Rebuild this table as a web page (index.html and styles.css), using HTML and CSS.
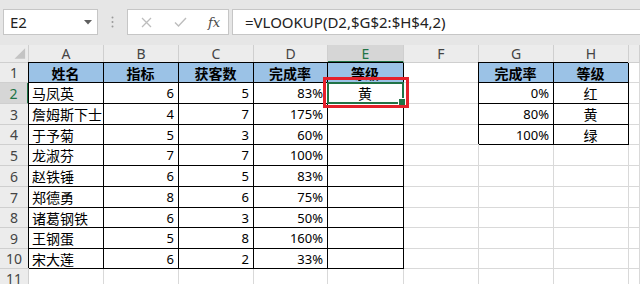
FILE: index.html
```html
<!DOCTYPE html>
<html lang="zh">
<head>
    <meta charset="UTF-8">
    <title>等级查询</title>
    <link rel="stylesheet" href="styles.css">
</head>
<body>
    <!-- Name box + formula bar -->
    <div class="toolbar">
        <div class="namebox">
            <span>E2</span>
            <svg class="caret" width="8" height="5" viewBox="0 0 8 5"><path d="M0 0h8L4 4.5z" fill="#5f5f5f"/></svg>
        </div>
        <div class="grip">
            <svg width="3" height="12" viewBox="0 0 3 12"><circle cx="1.5" cy="1.5" r="1" fill="#9a9a9a"/><circle cx="1.5" cy="6" r="1" fill="#9a9a9a"/><circle cx="1.5" cy="10.5" r="1" fill="#9a9a9a"/></svg>
        </div>
        <div class="fxbox">
            <svg class="btn" width="11" height="11" viewBox="0 0 11 11"><path d="M1 1l9 9M10 1l-9 9" stroke="#bdbdbd" stroke-width="1.3"/></svg>
            <svg class="btn" width="13" height="10" viewBox="0 0 13 10"><path d="M1 5.5l3.5 3.5L12 1" stroke="#bdbdbd" stroke-width="1.4" fill="none"/></svg>
            <span class="fx">fx</span>
        </div>
        <div class="formula">=VLOOKUP(D2,$G$2:$H$4,2)</div>
    </div>

    <!-- Worksheet -->
    <div class="sheet">
        <div class="corner"><svg width="29" height="18" viewBox="0 0 29 18"><path d="M26 3v11H15z" fill="#c4c4c4"/></svg></div>
        <div class="ch">A</div><div class="ch">B</div><div class="ch">C</div><div class="ch">D</div>
        <div class="ch on">E</div><div class="ch">F</div><div class="ch">G</div><div class="ch">H</div><div class="ch"></div>

        <div class="rh">1</div>
        <div class="c t hd">姓名</div><div class="c t hd">指标</div><div class="c t hd">获客数</div><div class="c t hd">完成率</div><div class="c t hd">等级</div>
        <div class="c"></div><div class="c t hd">完成率</div><div class="c t hd">等级</div><div class="c"></div>

        <div class="rh on">2</div>
        <div class="c t">马凤英</div><div class="c t n">6</div><div class="c t n">5</div><div class="c t n">83%</div>
        <div class="c t m sel">黄<span class="pick"></span><span class="mark"></span></div>
        <div class="c"></div><div class="c t n">0%</div><div class="c t m">红</div><div class="c"></div>

        <div class="rh">3</div>
        <div class="c t">詹姆斯下士</div><div class="c t n">4</div><div class="c t n">7</div><div class="c t n">175%</div><div class="c t"></div>
        <div class="c"></div><div class="c t n">80%</div><div class="c t m">黄</div><div class="c"></div>

        <div class="rh">4</div>
        <div class="c t">于予菊</div><div class="c t n">5</div><div class="c t n">3</div><div class="c t n">60%</div><div class="c t"></div>
        <div class="c"></div><div class="c t n">100%</div><div class="c t m">绿</div><div class="c"></div>

        <div class="rh">5</div>
        <div class="c t">龙淑芬</div><div class="c t n">7</div><div class="c t n">7</div><div class="c t n">100%</div><div class="c t"></div>
        <div class="c"></div><div class="c"></div><div class="c"></div><div class="c"></div>

        <div class="rh">6</div>
        <div class="c t">赵铁锤</div><div class="c t n">6</div><div class="c t n">5</div><div class="c t n">83%</div><div class="c t"></div>
        <div class="c"></div><div class="c"></div><div class="c"></div><div class="c"></div>

        <div class="rh">7</div>
        <div class="c t">郑德勇</div><div class="c t n">8</div><div class="c t n">6</div><div class="c t n">75%</div><div class="c t"></div>
        <div class="c"></div><div class="c"></div><div class="c"></div><div class="c"></div>

        <div class="rh">8</div>
        <div class="c t">诸葛钢铁</div><div class="c t n">6</div><div class="c t n">3</div><div class="c t n">50%</div><div class="c t"></div>
        <div class="c"></div><div class="c"></div><div class="c"></div><div class="c"></div>

        <div class="rh">9</div>
        <div class="c t">王钢蛋</div><div class="c t n">5</div><div class="c t n">8</div><div class="c t n">160%</div><div class="c t"></div>
        <div class="c"></div><div class="c"></div><div class="c"></div><div class="c"></div>

        <div class="rh">10</div>
        <div class="c t">宋大莲</div><div class="c t n">6</div><div class="c t n">2</div><div class="c t n">33%</div><div class="c t"></div>
        <div class="c"></div><div class="c"></div><div class="c"></div><div class="c"></div>

        <div class="rh">11</div>
        <div class="c"></div><div class="c"></div><div class="c"></div><div class="c"></div><div class="c"></div>
        <div class="c"></div><div class="c"></div><div class="c"></div><div class="c"></div>
    </div>
</body>
</html>
```

FILE: styles.css
```css
* {
    box-sizing: border-box;
}
body {
    margin: 0;
    width: 640px;
    height: 284px;
    overflow: hidden;
    background-color: #fff;
    font-family: "Noto Sans", "Noto Sans CJK SC", sans-serif;
    color: #000;
}

/* formula bar */
.toolbar {
    height: 45px;
    background-color: #e6e6e6;
    display: flex;
    align-items: flex-start;
    padding: 9px 0 0 3px;
}
.namebox {
    width: 95px;
    height: 26px;
    background-color: #fff;
    border: 1px solid #c6c6c6;
    display: flex;
    align-items: center;
    justify-content: space-between;
    padding: 0 5px 0 6px;
    font-size: 15px;
    color: #222;
}
.grip {
    width: 29px;
    height: 26px;
    display: flex;
    align-items: center;
    justify-content: center;
}
.fxbox {
    width: 102px;
    height: 26px;
    background-color: #fff;
    border: 1px solid #c6c6c6;
    display: flex;
    align-items: center;
    padding-left: 13px;
    gap: 22px;
}
.fx {
    font-family: "DejaVu Serif", serif;
    font-style: italic;
    font-size: 13px;
    color: #4a4a4a;
    margin-left: -1px;
}
.formula {
    flex: 1;
    height: 26px;
    margin-left: 3px;
    background-color: #fff;
    border: 1px solid #c6c6c6;
    border-right: none;
    display: flex;
    align-items: center;
    padding-left: 12px;
    font-size: 15px;
    color: #222;
}

/* grid */
.sheet {
    display: grid;
    grid-template-columns: 29px 75px 75px 75px 74px 76px 75px 75px 75px 1fr;
    grid-template-rows: 18px 20px 21px 21px 20px 21px 21px 21px 20px 21px 20px 1fr;
    height: 239px;
}
.corner,
.ch,
.rh {
    background-color: #ececec;
    border-right: 1px solid #cfcfcf;
    border-bottom: 1px solid #cfcfcf;
    display: flex;
    align-items: center;
    justify-content: center;
    font-size: 14px;
    color: #444;
}
.ch.on {
    background-color: #d6d6d6;
    color: #217346;
    border-bottom: 2px solid #217346;
}
.rh.on {
    background-color: #d6d6d6;
    color: #217346;
    border-right: 2px solid #217346;
}
.c {
    border-right: 1px solid #d9d9d9;
    border-bottom: 1px solid #d9d9d9;
    display: flex;
    align-items: center;
    padding: 0 4px 0 3px;
    font-size: 14px;
    white-space: nowrap;
}
.t {
    border-right-color: #000;
    border-bottom-color: #000;
    box-shadow: -1px -1px 0 #000;
}
.hd {
    background-color: #9bc2e6;
    font-weight: bold;
    justify-content: center;
}
.n {
    justify-content: flex-end;
    font-size: 13px;
}
.m {
    justify-content: center;
}

/* active cell */
.sel {
    position: relative;
}
.pick {
    position: absolute;
    top: -1px;
    left: -1px;
    right: -1px;
    bottom: -1px;
    border: 2px solid #217346;
}
.pick::after {
    content: "";
    position: absolute;
    right: -4px;
    bottom: -4px;
    width: 6px;
    height: 6px;
    background-color: #217346;
    border: 1px solid #fff;
}
.mark {
    position: absolute;
    top: -6px;
    left: -5px;
    right: -6px;
    bottom: -5px;
    border: 3px solid #e5212b;
}
```
